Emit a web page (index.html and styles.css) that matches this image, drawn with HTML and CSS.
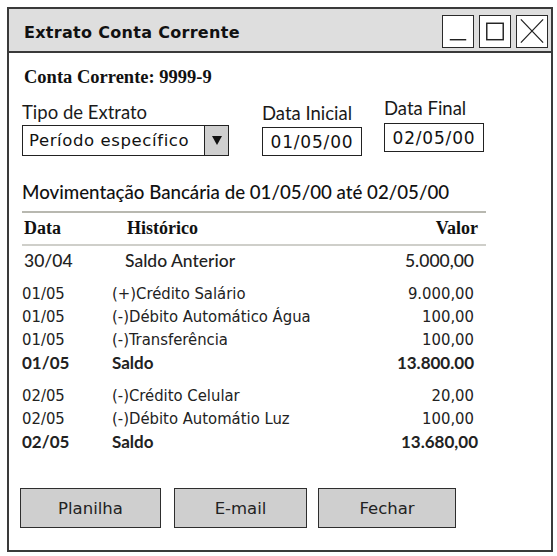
FILE: index.html
```html
<!DOCTYPE html>
<html>
<head>
<meta charset="utf-8">
<link rel="stylesheet" href="styles.css">
</head>
<body>
<div class="window">
  <div class="titlebar">
    <div class="title">Extrato Conta Corrente</div>
    <div class="winbtns">
      <div class="winbtn"><svg width="31" height="32" viewBox="0 0 31 32"><line x1="7" y1="25" x2="24" y2="25" stroke="#222" stroke-width="1.5"/></svg></div>
      <div class="winbtn"><svg width="31" height="32" viewBox="0 0 31 32"><rect x="7" y="8" width="17" height="17" fill="none" stroke="#222" stroke-width="1.5"/></svg></div>
      <div class="winbtn"><svg width="31" height="32" viewBox="0 0 31 32"><path d="M4 4 L27 28 M27 4 L4 28" stroke="#222" stroke-width="1.3" fill="none"/></svg></div>
    </div>
  </div>
  <div class="content">
    <div class="account">Conta Corrente: 9999-9</div>
    <div class="form">
      <div class="field f-tipo">
        <div class="label">Tipo de Extrato</div>
        <div class="select">
          <span class="select-text">Período específico</span>
          <span class="select-btn"><svg width="10" height="9" viewBox="0 0 10 9"><path d="M0 0 L10 0 L5 9 Z" fill="#111"/></svg></span>
        </div>
      </div>
      <div class="field f-ini">
        <div class="label">Data Inicial</div>
        <div class="input">01/05/00</div>
      </div>
      <div class="field f-fim">
        <div class="label">Data Final</div>
        <div class="input">02/05/00</div>
      </div>
    </div>
    <div class="heading">Movimentação Bancária de 01/05/00 até 02/05/00</div>
    <div class="table">
      <div class="thead">
        <span class="c-date">Data</span>
        <span class="c-hist">Histórico</span>
        <span class="c-val">Valor</span>
      </div>
      <div class="row prev">
        <span class="c-date">30/04</span>
        <span class="c-hist">Saldo Anterior</span>
        <span class="c-val">5.000,00</span>
      </div>
      <div class="group">
        <div class="row"><span class="c-date">01/05</span><span class="c-hist">(+)Crédito Salário</span><span class="c-val">9.000,00</span></div>
        <div class="row"><span class="c-date">01/05</span><span class="c-hist">(-)Débito Automático Água</span><span class="c-val">100,00</span></div>
        <div class="row"><span class="c-date">01/05</span><span class="c-hist">(-)Transferência</span><span class="c-val">100,00</span></div>
        <div class="row bold"><span class="c-date">01/05</span><span class="c-hist">Saldo</span><span class="c-val">13.800.00</span></div>
      </div>
      <div class="group g2">
        <div class="row"><span class="c-date">02/05</span><span class="c-hist">(-)Crédito Celular</span><span class="c-val">20,00</span></div>
        <div class="row"><span class="c-date">02/05</span><span class="c-hist">(-)Débito Automátio Luz</span><span class="c-val">100,00</span></div>
        <div class="row bold last"><span class="c-date">02/05</span><span class="c-hist">Saldo</span><span class="c-val">13.680,00</span></div>
      </div>
    </div>
    <div class="buttons">
      <div class="btn b1">Planilha</div>
      <div class="btn b2">E-mail</div>
      <div class="btn b3">Fechar</div>
    </div>
  </div>
</div>
</body>
</html>
```

FILE: styles.css
```css
* { box-sizing: border-box; }
html, body { margin: 0; padding: 0; background: #fff; }
body { padding: 7px 0 0 7px; }

.window {
  width: 546px;
  height: 545px;
  border: 2px solid #3a3a3a;
  background: #fff;
  display: flex;
  flex-direction: column;
}

.titlebar {
  height: 44px;
  background: #dedede;
  border-bottom: 2px solid #3a3a3a;
  display: flex;
  align-items: center;
  justify-content: space-between;
  padding: 0 3px 0 15px;
}
.title {
  font-family: "DejaVu Sans", sans-serif;
  font-weight: bold;
  font-size: 16px;
  color: #111;
  letter-spacing: 0.3px;
  margin-top: 4px;
}
.winbtns { display: flex; gap: 5px; margin-top: 2px; }
.winbtn {
  width: 32px;
  height: 33px;
  border: 1.5px solid #2a2a2a;
  background: #fff;
  display: flex;
  align-items: center;
  justify-content: center;
}
.winbtn svg { display: block; }

.content {
  padding: 0 0 0 13px;
  flex: 1;
}

.account {
  font-family: "Liberation Serif", serif;
  font-weight: bold;
  font-size: 18.5px;
  line-height: 20px;
  margin-top: 14px;
  margin-left: 2px;
  color: #111;
}

.form {
  display: flex;
  align-items: flex-start;
  margin-top: 9px;
}
.field .label {
  font-family: Lato, sans-serif;
  font-size: 18.5px;
  font-weight: 400;
  color: #1a1a1a;
  line-height: 22px;
}
.f-tipo { width: 240px; }
.f-tipo .label { margin-top: 5px; }
.f-ini { width: 122px; }
.f-ini .label { margin-top: 6px; }
.f-fim .label { margin-top: 1px; }

.select {
  margin-top: 2px;
  width: 207px;
  height: 31px;
  border: 1.5px solid #222;
  display: flex;
  align-items: stretch;
  background: #fff;
}
.select-text {
  flex: 1;
  font-family: "DejaVu Sans", sans-serif;
  font-size: 16.5px;
  letter-spacing: 0.6px;
  padding-left: 6px;
  display: flex;
  align-items: center;
  color: #111;
}
.select-btn {
  width: 24px;
  background: #cfcfcf;
  border-left: 1.5px solid #222;
  display: flex;
  align-items: center;
  justify-content: center;
}
.select-btn svg { display: block; }

.input {
  width: 100px;
  height: 29px;
  border: 1.5px solid #222;
  font-family: "DejaVu Sans", sans-serif;
  font-size: 17px;
  letter-spacing: 0.8px;
  display: flex;
  align-items: center;
  justify-content: center;
  color: #111;
}
.f-ini .input { margin-top: 3px; }
.f-fim .input { margin-top: 4px; }

.heading {
  font-family: Lato, sans-serif;
  font-size: 18.7px;
  font-weight: 500;
  color: #111;
  line-height: 22px;
  margin-top: 25px;
}

.table { width: 464px; margin-top: 8px; }
.thead {
  border-top: 2px solid #b8b8b0;
  border-bottom: 2px solid #cfcfca;
  display: flex;
  height: 35px;
  align-items: center;
  font-family: "Liberation Serif", serif;
  font-weight: bold;
  font-size: 18px;
  color: #111;
  width: 464px;
}
.thead .c-date { width: 105px; padding-left: 2px; }
.thead .c-hist { flex: 1; }
.thead .c-val { padding-right: 8px; }

.row {
  display: flex;
  align-items: center;
  height: 23px;
  font-family: "DejaVu Sans Condensed", "DejaVu Sans", sans-serif;
  font-stretch: semi-condensed;
  font-size: 16.5px;
  color: #222;
  width: 452px;
}
.row .c-date { width: 90px; }
.row .c-hist { flex: 1; }
.row .c-val { text-align: right; }

.row.prev {
  font-family: Lato, sans-serif;
  font-size: 17.5px;
  font-weight: 500;
  height: 26px;
  margin-top: 1px;
}
.row.prev .c-date { width: 103px; padding-left: 2px; }

.group { margin-top: 9px; }
.group.g2 { margin-top: 10px; }
.row.bold {
  font-family: Lato, sans-serif;
  font-weight: bold;
  font-size: 17px;
}
.row.bold.last .c-val { margin-right: -4px; }

.buttons {
  display: flex;
  margin-top: 35px;
  margin-left: -2px;
}
.btn {
  height: 40px;
  background: #cfcfcf;
  border: 1.5px solid #2e2e2e;
  font-family: "DejaVu Sans", sans-serif;
  font-size: 16.5px;
  color: #222;
  display: flex;
  align-items: center;
  justify-content: center;
}
.b1 { width: 141px; }
.b2 { width: 133px; margin-left: 13px; }
.b3 { width: 138px; margin-left: 11px; }
```
